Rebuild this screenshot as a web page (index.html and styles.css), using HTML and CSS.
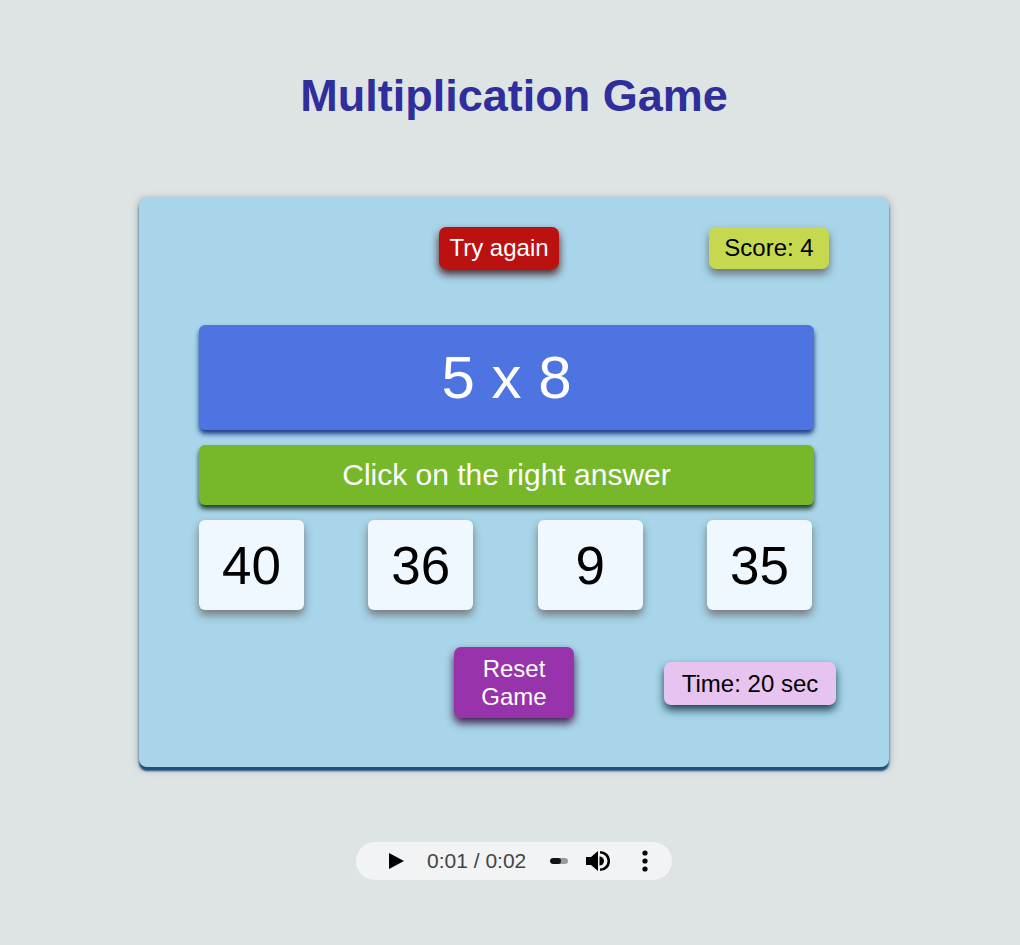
FILE: index.html
```html
<!DOCTYPE html>
<html>
<head>
<meta charset="utf-8">
<title>Multiplication Game</title>
<link rel="stylesheet" href="styles.css">
</head>
<body>
<h1 class="title">Multiplication Game</h1>
<div class="game">
  <div class="top-row">
    <div class="btn try-again">Try again</div>
    <div class="score">Score: 4</div>
  </div>
  <div class="question">5 x 8</div>
  <div class="instruction">Click on the right answer</div>
  <div class="choices">
    <div class="choice">40</div>
    <div class="choice">36</div>
    <div class="choice">9</div>
    <div class="choice">35</div>
  </div>
  <div class="bottom-row">
    <div class="btn reset">Reset<br>Game</div>
    <div class="time">Time: 20 sec</div>
  </div>
</div>
<div class="player">
  <svg class="play" width="15" height="16" viewBox="0 0 15 16"><path d="M0 0 L15 8 L0 16 Z" fill="#000"/></svg>
  <span class="ptime">0:01 / 0:02</span>
  <span class="slider"><span class="slider-fill"></span></span>
  <svg class="vol" width="24" height="22" viewBox="0 0 24 22"><path d="M0 7v8h5l7 6V1L5 7H0z" fill="#000"/><path d="M13.5 6.5a4.5 4.5 0 0 1 0 9z" fill="#000"/><path d="M14 2.2a8.8 8.8 0 0 1 0 17.6" fill="none" stroke="#000" stroke-width="2.6"/></svg>
  <svg class="dots" width="6" height="22" viewBox="0 0 6 22"><circle cx="3" cy="3" r="2.6"/><circle cx="3" cy="11" r="2.6"/><circle cx="3" cy="19" r="2.6"/></svg>
</div>
</body>
</html>
```

FILE: styles.css
```css
html, body {
  margin: 0;
  padding: 0;
}
body {
  background: #dee3e3;
  font-family: "Liberation Sans", Arial, sans-serif;
  padding-left: 8px;
  display: flex;
  flex-direction: column;
  align-items: center;
  min-height: 945px;
  box-sizing: border-box;
}
.title {
  margin: 70px 0 0;
  font-size: 45px;
  line-height: 52px;
  font-weight: bold;
  color: #2e2e9c;
  text-align: center;
}
.game {
  margin-top: 75px;
  width: 750px;
  height: 570px;
  box-sizing: border-box;
  padding: 30px 60px 0 60px;
  background: #a8d5ea;
  border-radius: 8px;
  box-shadow: 0 4px 2px #1d4f7f, 0 2px 7px rgba(60, 80, 90, 0.5);
  display: flex;
  flex-direction: column;
}
.top-row {
  display: flex;
  height: 42px;
}
.btn, .score, .time {
  border-radius: 7px;
  display: flex;
  align-items: center;
  justify-content: center;
  box-sizing: border-box;
  flex-shrink: 0;
}
.try-again {
  margin-left: 240px;
  width: 120px;
  height: 42px;
  background: #bc1111;
  color: #fff;
  font-size: 24px;
  box-shadow: 0 5px 8px rgba(70, 20, 20, 0.95);
}
.score {
  margin-left: auto;
  width: 120px;
  height: 42px;
  background: #c6d84f;
  color: #000;
  font-size: 24px;
  box-shadow: 0 5px 8px rgba(90, 90, 90, 0.8);
}
.question {
  margin-top: 56px;
  width: 615px;
  height: 105px;
  background: #4d74e0;
  color: #fff;
  font-size: 60px;
  border-radius: 6px;
  display: flex;
  align-items: center;
  justify-content: center;
  box-shadow: 0 4px 5px #1e3d8a;
}
.instruction {
  margin-top: 15px;
  width: 615px;
  height: 60px;
  background: #76b82a;
  color: #fff;
  font-size: 30px;
  border-radius: 6px;
  display: flex;
  align-items: center;
  justify-content: center;
  box-shadow: 0 4px 5px #233d2c;
}
.choices {
  margin-top: 15px;
  width: 613px;
  display: flex;
  justify-content: space-between;
}
.choice {
  width: 105px;
  height: 90px;
  background: #f0f8ff;
  color: #000;
  font-size: 53px;
  border-radius: 6px;
  display: flex;
  align-items: center;
  justify-content: center;
  box-shadow: 0 5px 8px rgba(110, 110, 110, 0.9);
}
.bottom-row {
  margin-top: 37px;
  display: flex;
  align-items: flex-start;
}
.reset {
  margin-left: 255px;
  width: 120px;
  height: 71px;
  background: #9933ab;
  color: #fff;
  font-size: 24px;
  line-height: 28px;
  text-align: center;
  box-shadow: 0 5px 8px rgba(60, 20, 70, 0.95);
}
.time {
  margin-left: 90px;
  margin-top: 15px;
  width: 172px;
  height: 43px;
  background: #e6c4ef;
  color: #000;
  font-size: 24px;
  box-shadow: 0 5px 8px rgba(20, 60, 70, 0.95);
}
.player {
  margin-top: 75px;
  width: 316px;
  height: 38px;
  border-radius: 19px;
  background: #f1f3f4;
  display: flex;
  align-items: center;
  box-sizing: border-box;
  padding-left: 33px;
}
.play {
  display: block;
}
.ptime {
  margin-left: 23px;
  font-family: "Liberation Sans", Arial, sans-serif;
  font-size: 21px;
  color: #444;
}
.slider {
  margin-left: 24px;
  width: 18px;
  height: 6px;
  border-radius: 3px;
  background: #9a9a9a;
  display: block;
  overflow: hidden;
}
.slider-fill {
  display: block;
  width: 11px;
  height: 6px;
  background: #111;
  border-radius: 3px;
}
.vol {
  margin-left: 18px;
  display: block;
}
.dots {
  margin-left: 32px;
  display: block;
}
```
